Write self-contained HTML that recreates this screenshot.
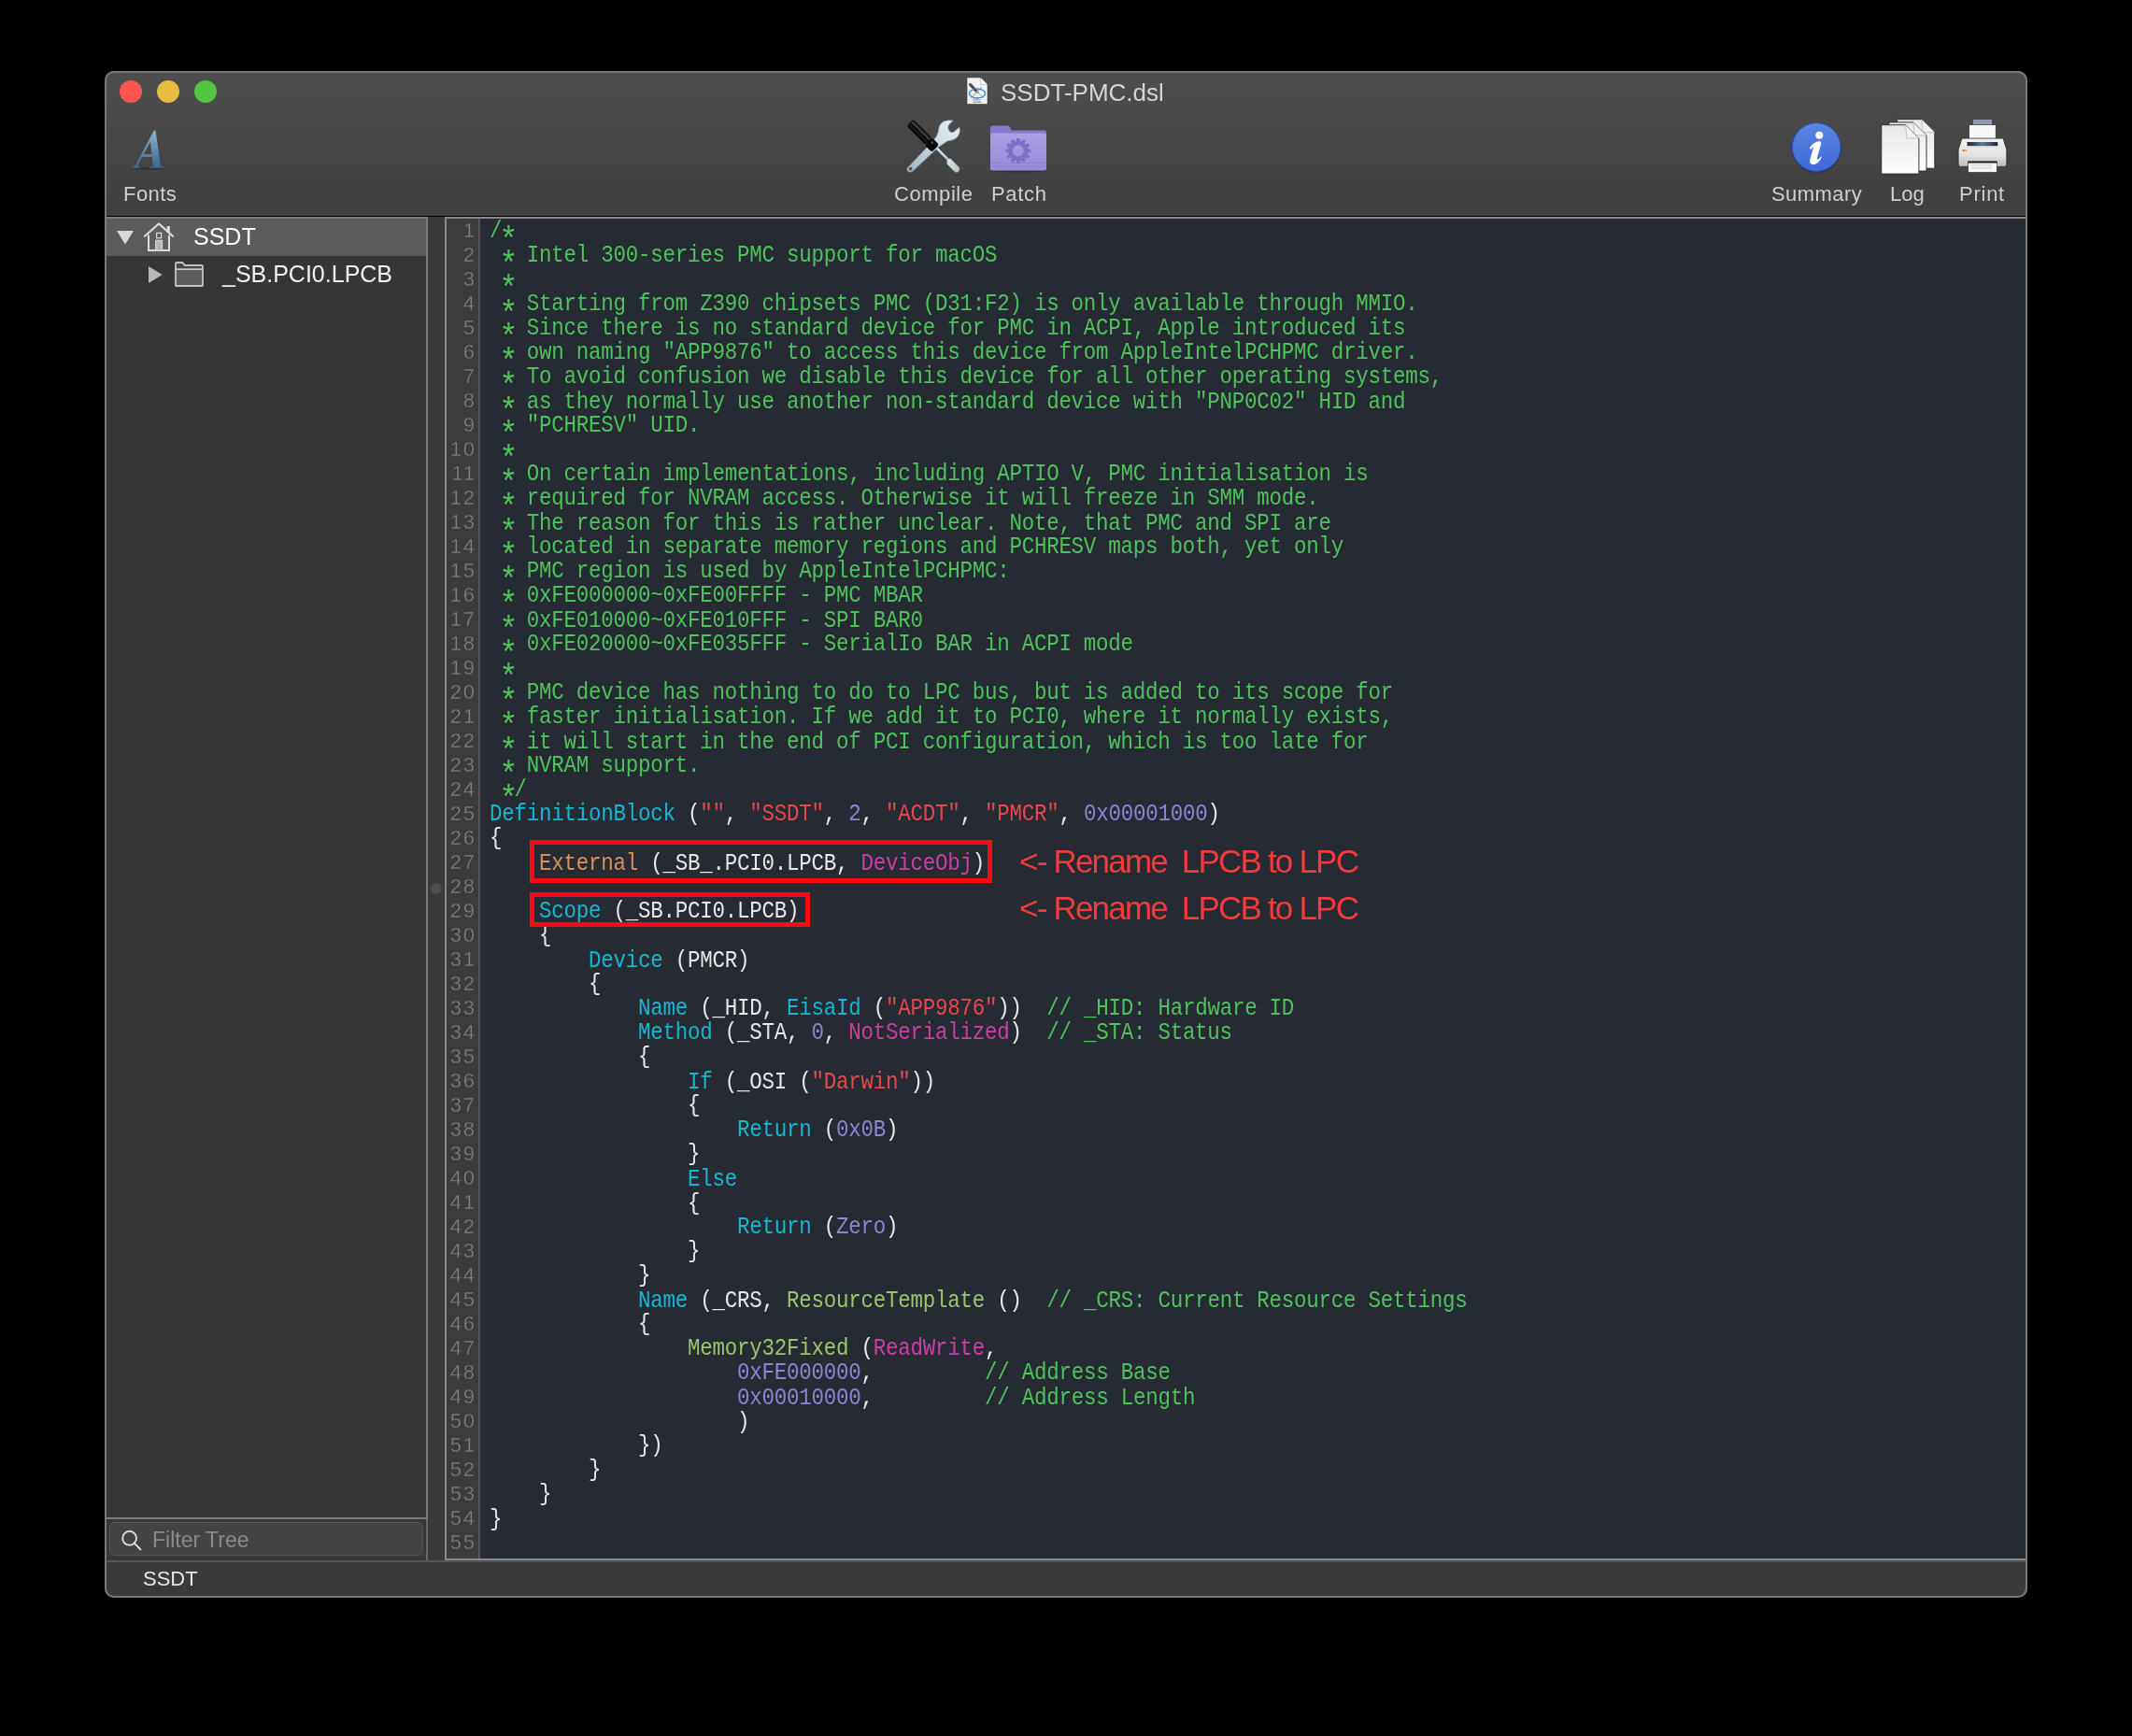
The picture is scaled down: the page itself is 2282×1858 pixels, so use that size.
<!DOCTYPE html>
<html><head><meta charset="utf-8">
<style>
*{margin:0;padding:0;box-sizing:border-box}
html,body{width:2282px;height:1858px;background:#000;overflow:hidden}
body{position:relative;font-family:"Liberation Sans",sans-serif}
.abs{position:absolute}
.nums,.code,.lbl,.ann{will-change:transform}
.ast{display:inline-block;transform:translate(0.6px,9.9px) scale(1.5)}
.win{position:absolute;left:112px;top:76px;width:2058px;height:1634px;border-radius:10px;overflow:hidden;background:#3a3a3a}
.tb{position:absolute;left:0;top:0;width:2058px;height:155px;background:linear-gradient(#4e4e4e,#3f3f3f)}
.tbline{position:absolute;left:0;top:155px;width:2058px;height:1px;background:#000}
.side{position:absolute;left:0;top:156px;width:346px;height:1394px;background:#363636;border:2px solid #7c7c7c;border-left-color:#8a8a8a}
.hl{position:absolute;left:0;top:0;width:342px;height:40px;background:#5b5b5b}
.gap{position:absolute;left:346px;top:156px;width:18px;height:1438px;background:#3a3a3a}
.filt{position:absolute;left:0;top:1550px;width:346px;height:44px;background:#383838;border-right:2px solid #6a6a6a}
.ed{position:absolute;left:364px;top:156px;width:1694px;height:1438px;border:2px solid #8a8a8a;background:#262a33}
.gut{position:absolute;left:0;top:0;width:36px;height:1434px;background:#3c3c3c;border-right:2px solid #555}
.status{position:absolute;left:0;top:1594px;width:2058px;height:40px;background:#3a3a3a;border-top:2px solid #555}
.wborder{position:absolute;left:112px;top:76px;width:2058px;height:1634px;border-radius:10px;border:2px solid #7a7a7a;pointer-events:none}
.lbl{position:absolute;font-size:22px;line-height:25px;color:#cfcfcf;white-space:pre}
.code{position:absolute;left:523.5px;top:235px;font-family:"Liberation Mono",monospace;font-size:22.5px;line-height:23.2143px;letter-spacing:-0.255px;color:#e8e8e8;white-space:pre;transform:scaleY(1.12);transform-origin:0 0}
.nums{position:absolute;left:440px;top:233.5px;width:69.5px;text-align:right;font-size:22px;line-height:26px;color:#808080;white-space:pre;letter-spacing:1.6px;-webkit-text-stroke:0.35px #3c3c3c}
.c{color:#4ec35c}
.k{color:#14b8d2}
.s{color:#e9474e}
.n{color:#8c84d6}
.m{color:#cb3fa4}
.e{color:#d9915b}
.r{color:#9cc46c}
.redbox{position:absolute;border:5px solid #ff0a10}
.ann{position:absolute;font-size:35px;line-height:40px;color:#f53b3b;white-space:pre;letter-spacing:-1.8px}
</style></head><body>
<div class="win">
  <div class="tb"></div>
  <div class="tbline"></div>
  <div class="side"><div class="hl"></div></div>
  <div class="gap"></div>
  <div class="filt"></div>
  <div class="ed"><div class="gut"></div></div>
  <div class="status"></div>
</div>
<div class="wborder"></div>

<!-- traffic lights -->
<div class="abs" style="left:128px;top:86px;width:24px;height:24px;border-radius:50%;background:#fd5650"></div>
<div class="abs" style="left:168px;top:86px;width:24px;height:24px;border-radius:50%;background:#e7bc41"></div>
<div class="abs" style="left:208px;top:86px;width:24px;height:24px;border-radius:50%;background:#54c542"></div>

<!-- title -->

<div class="lbl" style="left:1071px;top:84px;font-size:26px;line-height:30px;color:#d6d6d6">SSDT-PMC.dsl</div>

<!-- toolbar labels -->
<div class="lbl" style="left:132px;top:195px;letter-spacing:0.45px">Fonts</div>
<div class="lbl" style="left:956.5px;top:195px;letter-spacing:0.55px">Compile</div>
<div class="lbl" style="left:1061px;top:195px;letter-spacing:0.7px">Patch</div>
<div class="lbl" style="left:1895.5px;top:195px;letter-spacing:0.42px">Summary</div>
<div class="lbl" style="left:2023px;top:195px">Log</div>
<div class="lbl" style="left:2097px;top:195px;letter-spacing:0.75px">Print</div>

<!-- sidebar -->
<div class="lbl" style="left:206.5px;top:238.5px;font-size:25px;line-height:29px;color:#fff">SSDT</div>
<div class="lbl" style="left:238px;top:279px;font-size:25px;line-height:29px;color:#f2f2f2">_SB.PCI0.LPCB</div>

<!-- filter -->
<div class="abs" style="left:117px;top:1629px;width:336px;height:36px;border-radius:6px;background:#444;border:1px solid #575757"></div>
<div class="lbl" style="left:163px;top:1636px;font-size:23px;color:#8a8a8a">Filter Tree</div>
<div class="lbl" style="left:153px;top:1677px;color:#e6e6e6">SSDT</div>


<!-- title file icon -->
<svg class="abs" style="left:1030px;top:80px" width="32" height="36" viewBox="1030 80 32 36">
  <path d="M1035 83 H1049.5 L1057 90.5 V111.5 H1035 Z" fill="#f3f3f3" stroke="#3a3a3a" stroke-width="0.6"/>
  <path d="M1049.5 83 V90.5 H1057 Z" fill="#fff" stroke="#999" stroke-width="0.5"/>
  <line x1="1038.5" y1="90.5" x2="1046" y2="98.5" stroke="#444" stroke-width="3" stroke-linecap="round"/>
  <line x1="1046" y1="98.5" x2="1053" y2="105" stroke="#aaa" stroke-width="1"/>
  <line x1="1039" y1="105" x2="1051" y2="93" stroke="#bbb" stroke-width="1.4"/>
  <ellipse cx="1046" cy="100" rx="8.5" ry="5" fill="none" stroke="#2b86d1" stroke-width="1.3"/>
  <text x="1046" y="110" font-family="Liberation Sans" font-size="5" fill="#666" text-anchor="middle">DSL</text>
</svg>

<!-- Fonts A -->
<svg class="abs" style="left:138px;top:136px" width="44" height="50" viewBox="138 136 44 50">
  <defs><linearGradient id="ga" x1="0" y1="0" x2="0" y2="1"><stop offset="0" stop-color="#8db2cf"/><stop offset="1" stop-color="#3b6690"/></linearGradient></defs>
  <ellipse cx="159" cy="180.3" rx="17" ry="1.6" fill="#2e2e2e" opacity="0.7"/>
  <path fill="url(#ga)" fill-rule="evenodd" d="M164.8 139.8 L166.6 139.8 L172 178 L175 178.3 L175 179.8 L160.2 179.8 L160.2 178.3 L163.8 178 L162.8 168 L152 168 L147.6 176.5 Q147 178.2 149.5 178.3 L150 179.8 L142 179.8 L142 178.3 Q144.3 178.2 145.2 176.6 Z M161 151.8 L162.5 165 L153.6 165 Z"/>
</svg>

<!-- Compile icon -->
<svg class="abs" style="left:962px;top:122px" width="72" height="72" viewBox="962 122 72 72">
  <defs>
    <linearGradient id="gw" x1="1" y1="0" x2="0" y2="1"><stop offset="0" stop-color="#e6f1f6"/><stop offset="0.5" stop-color="#c9d8e0"/><stop offset="1" stop-color="#a3b2bb"/></linearGradient>
    <linearGradient id="gs" x1="0" y1="0" x2="1" y2="1"><stop offset="0" stop-color="#dfe8ec"/><stop offset="1" stop-color="#b5c3ca"/></linearGradient>
    <linearGradient id="gh" x1="0" y1="0" x2="0" y2="1"><stop offset="0" stop-color="#050505"/><stop offset="0.3" stop-color="#4a4a4a"/><stop offset="0.45" stop-color="#0d0d0d"/><stop offset="0.75" stop-color="#1a1a1a"/><stop offset="1" stop-color="#000"/></linearGradient>
  </defs>
  <path d="M973.4 177.6 L999.5 150 Q1003 146 1004.2 141.2 Q1004.5 133 1010 130 Q1015 128 1020.2 129.1 L1015.1 134.2 Q1013.8 138.5 1017.1 141.2 Q1019.5 142.5 1021.4 140.8 L1026.9 136.1 Q1028.5 142 1025.3 145.9 Q1022 150 1014 151 L1004.2 157.7 L977.8 182.4 Q974.6 185.6 971.8 183.2 Q969.2 180.4 973.4 177.6 Z" fill="url(#gw)" stroke="#7f9aaa" stroke-width="0.7"/>
  <circle cx="974.6" cy="180.6" r="1.9" fill="#444" stroke="#8aa3b1" stroke-width="0.5"/>
  <path d="M999.5 157.5 L1001.5 155.5 L1016.5 170.5 L1014.5 172.5 Z" fill="url(#gs)" stroke="#62727b" stroke-width="0.5"/>
  <path d="M1013.2 171.3 Q1014.5 168.8 1017.5 169.8 L1026.8 179.2 Q1028.2 182 1025.5 184.3 Q1023 185.5 1021 183.3 L1013.5 175.5 Z" fill="url(#gs)" stroke="#5f6e76" stroke-width="0.6"/>
  <g transform="translate(984 141.3) rotate(45)">
    <rect x="-13.8" y="-4.7" width="27.6" height="9.4" rx="2.4" fill="url(#gh)" stroke="#000" stroke-width="0.8"/>
  </g>
  <g transform="translate(997.6 155.2) rotate(45)">
    <rect x="-5.2" y="-5.6" width="10.4" height="11.2" rx="2.6" fill="#070707"/>
    <rect x="-3.2" y="-3.5" width="3" height="3" rx="1" fill="#555" opacity="0.8"/>
  </g>
</svg>
<!-- Patch folder -->
<svg class="abs" style="left:1056px;top:130px" width="68" height="56" viewBox="1056 130 68 56">
  <defs><linearGradient id="gf" x1="0" y1="0" x2="0" y2="1"><stop offset="0" stop-color="#ac9fe3"/><stop offset="1" stop-color="#998bd8"/></linearGradient></defs>
  <ellipse cx="1090" cy="183" rx="30" ry="1.5" fill="#2b2b2b" opacity="0.6"/>
  <path d="M1062 134.5 H1078.5 Q1080 134.5 1081 136 L1083 139.6 H1118 Q1120 139.6 1120 141.6 V150 H1060 V136.5 Q1060 134.5 1062 134.5 Z" fill="#8679c8"/>
  <rect x="1060" y="142.4" width="60" height="40" rx="2.5" fill="url(#gf)"/>
  <rect x="1060" y="174" width="60" height="1" fill="#8d80cc" opacity="0.8"/>
  <rect x="1060" y="177" width="60" height="1" fill="#8d80cc" opacity="0.8"/>
  <g transform="translate(1089.8 161.5)" fill="#7d6ec6"><path fill-rule="evenodd" d="M-1.93 -10.42 L-1.78 -13.48 L1.78 -13.48 L1.93 -10.42 L3.54 -9.99 L5.20 -12.56 L8.28 -10.79 L6.88 -8.06 L8.06 -6.88 L10.79 -8.28 L12.56 -5.20 L9.99 -3.54 L10.42 -1.93 L13.48 -1.78 L13.48 1.78 L10.42 1.93 L9.99 3.54 L12.56 5.20 L10.79 8.28 L8.06 6.88 L6.88 8.06 L8.28 10.79 L5.20 12.56 L3.54 9.99 L1.93 10.42 L1.78 13.48 L-1.78 13.48 L-1.93 10.42 L-3.54 9.99 L-5.20 12.56 L-8.28 10.79 L-6.88 8.06 L-8.06 6.88 L-10.79 8.28 L-12.56 5.20 L-9.99 3.54 L-10.42 1.93 L-13.48 1.78 L-13.48 -1.78 L-10.42 -1.93 L-9.99 -3.54 L-12.56 -5.20 L-10.79 -8.28 L-8.06 -6.88 L-6.88 -8.06 L-8.28 -10.79 L-5.20 -12.56 L-3.54 -9.99 Z M0 -6 A6 6 0 1 0 0.01 -6 Z"/></g>
</svg>

<!-- Summary -->
<svg class="abs" style="left:1912px;top:126px" width="66" height="64" viewBox="1912 126 66 64">
  <defs><linearGradient id="gi" x1="0" y1="0" x2="0" y2="1"><stop offset="0" stop-color="#5c85e0"/><stop offset="1" stop-color="#3d69d6"/></linearGradient></defs>
  <circle cx="1944.2" cy="158.8" r="26.3" fill="#2a2a2a" opacity="0.55"/>
  <circle cx="1944.2" cy="157.5" r="25.9" fill="url(#gi)" stroke="#1d4cc0" stroke-width="0.9"/>
  <circle cx="1947.3" cy="144.8" r="4" fill="#fff"/>
  <path fill="#fff" d="M1938.4 159.4 Q1936.4 160 1937 157.9 Q1941.5 152 1946.5 151.3 Q1949.5 150.8 1949.3 153.5 L1944.8 169.5 Q1944.6 171.2 1946 170.4 L1950.2 167 Q1948.5 173 1943.5 175.5 Q1939.5 177 1937.8 175 Q1936.8 173.5 1937.4 170.5 L1941.3 157.3 Z"/>
</svg>

<!-- Log -->
<svg class="abs" style="left:2010px;top:124px" width="66" height="66" viewBox="2010 124 66 66">
  <defs><linearGradient id="gp" x1="0" y1="0" x2="0" y2="1"><stop offset="0" stop-color="#e6e6e6"/><stop offset="1" stop-color="#ffffff"/></linearGradient></defs>
  <path d="M2030.7 127.7 H2057 L2070.8 141.5 V180.2 H2030.7 Z" fill="url(#gp)" stroke="#262626" stroke-width="0.9"/>
  <path d="M2057 127.7 L2070.8 141.5 H2058 Z" fill="#f0f0f0" stroke="#999" stroke-width="0.5"/>
  <path d="M2021.9 130.9 H2048 L2062 144.9 V183 H2021.9 Z" fill="url(#gp)" stroke="#262626" stroke-width="0.9"/>
  <path d="M2048 130.9 L2062 144.9 H2049 Z" fill="#f0f0f0" stroke="#999" stroke-width="0.5"/>
  <path d="M2013.8 133.7 H2039.5 L2053.9 148 V186.1 H2013.8 Z" fill="url(#gp)" stroke="#262626" stroke-width="0.9"/>
  <path d="M2039.5 133.7 L2053.9 148 H2041 Z" fill="#f2f2f2" stroke="#999" stroke-width="0.5"/>
</svg>

<!-- Print -->
<svg class="abs" style="left:2092px;top:124px" width="62" height="66" viewBox="2092 124 62 66">
  <defs>
    <linearGradient id="gb" x1="0" y1="0" x2="0" y2="1"><stop offset="0" stop-color="#f2f2f2"/><stop offset="0.6" stop-color="#e2e2e2"/><stop offset="1" stop-color="#b9b9b9"/></linearGradient>
    <linearGradient id="gsl" x1="0" y1="0" x2="1" y2="0"><stop offset="0" stop-color="#1b2433"/><stop offset="0.5" stop-color="#5c7aa0"/><stop offset="1" stop-color="#1b2433"/></linearGradient>
  </defs>
  <rect x="2112" y="128" width="20" height="6" fill="#8d9bb2"/>
  <rect x="2107.7" y="133.7" width="28.5" height="19" fill="#f7f7f7" stroke="#222" stroke-width="0.6"/>
  <path d="M2100 148.1 H2144 L2147.8 160 V176 Q2147.8 178.4 2145.5 178.4 H2098.4 Q2096.1 178.4 2096.1 176 V160 Z" fill="url(#gb)" stroke="#2a2a2a" stroke-width="0.8"/>
  <rect x="2105.6" y="152" width="32.7" height="4" fill="url(#gsl)"/>
  <rect x="2105.5" y="156" width="33" height="1.2" fill="#c8c8c8"/>
  <rect x="2100.5" y="160.2" width="3" height="1.6" fill="#e8553a"/>
  <rect x="2103.5" y="160.2" width="2" height="1.6" fill="#f0a030"/>
  <rect x="2106.2" y="172.4" width="31.6" height="2" fill="#222"/>
  <rect x="2106.7" y="174.2" width="30.6" height="10.2" fill="#f5f5f5" stroke="#333" stroke-width="0.6"/>
  <rect x="2110" y="176.5" width="22" height="0.8" fill="#bbb"/>
  <rect x="2110" y="179.5" width="22" height="0.8" fill="#bbb"/>
</svg>

<!-- sidebar icons -->
<svg class="abs" style="left:120px;top:236px" width="110" height="76" viewBox="120 236 110 76">
  <path d="M125 247.1 L143 247.1 L134 261.5 Z" fill="#d9d9d9"/>
  <path d="M159 285 L159 303.1 L173.7 294 Z" fill="#b9b9b9"/>
  <!-- house -->
  <path d="M159 252.5 L170 242 L181 252.5 V268 H159 Z" fill="#5d605f"/>
  <path d="M155 252.8 L170 239.5 L185 252.8" fill="none" stroke="#dcdcdc" stroke-width="2.2" stroke-linecap="round"/>
  <path d="M159 251.5 V268 H181 V251.5" fill="none" stroke="#dcdcdc" stroke-width="2"/>
  <rect x="178.6" y="242" width="3.2" height="7" fill="#dcdcdc"/>
  <rect x="167.6" y="249.4" width="5" height="5.4" fill="#5d605f" stroke="#dcdcdc" stroke-width="1.2"/>
  <rect x="166.6" y="257.2" width="7" height="10.8" fill="#b8b8b8" stroke="#dcdcdc" stroke-width="1"/>
  <!-- folder -->
  <path d="M187 281 H195 L197.5 284 H217 V305 H187 Z" fill="#464948"/>
  <rect x="187.6" y="288.2" width="29.4" height="17" fill="#595c5b"/>
  <path d="M188 305.5 V282.2 Q188 281 189.2 281 H195.2 L197.8 284 H215.6 Q217 284 217 285.4 V305.5 Q217 306 216.5 306 H188.5 Q188 306 188 305.5 Z" fill="none" stroke="#c3c3c3" stroke-width="1.8"/>
  <line x1="188" y1="288.2" x2="217" y2="288.2" stroke="#c3c3c3" stroke-width="1.8"/>
</svg>

<!-- search icon -->
<svg class="abs" style="left:124px;top:1632px" width="32" height="32" viewBox="124 1632 32 32">
  <circle cx="138.6" cy="1646.3" r="7.4" fill="none" stroke="#e6e6e6" stroke-width="1.8"/>
  <line x1="143.8" y1="1651.6" x2="150.4" y2="1658.4" stroke="#e6e6e6" stroke-width="1.9" stroke-linecap="round"/>
</svg>

<!-- divider dot -->
<div class="abs" style="left:461px;top:945px;width:12px;height:12px;border-radius:50%;background:#4f4f4f"></div>

<div class="nums">1
2
3
4
5
6
7
8
9
10
11
12
13
14
15
16
17
18
19
20
21
22
23
24
25
26
27
28
29
30
31
32
33
34
35
36
37
38
39
40
41
42
43
44
45
46
47
48
49
50
51
52
53
54
55</div>
<div class="code"><span class="c">/<span class="ast">*</span></span>
<span class="c"> <span class="ast">*</span> Intel 300-series PMC support for macOS</span>
<span class="c"> <span class="ast">*</span></span>
<span class="c"> <span class="ast">*</span> Starting from Z390 chipsets PMC (D31:F2) is only available through MMIO.</span>
<span class="c"> <span class="ast">*</span> Since there is no standard device for PMC in ACPI, Apple introduced its</span>
<span class="c"> <span class="ast">*</span> own naming "APP9876" to access this device from AppleIntelPCHPMC driver.</span>
<span class="c"> <span class="ast">*</span> To avoid confusion we disable this device for all other operating systems,</span>
<span class="c"> <span class="ast">*</span> as they normally use another non-standard device with "PNP0C02" HID and</span>
<span class="c"> <span class="ast">*</span> "PCHRESV" UID.</span>
<span class="c"> <span class="ast">*</span></span>
<span class="c"> <span class="ast">*</span> On certain implementations, including APTIO V, PMC initialisation is</span>
<span class="c"> <span class="ast">*</span> required for NVRAM access. Otherwise it will freeze in SMM mode.</span>
<span class="c"> <span class="ast">*</span> The reason for this is rather unclear. Note, that PMC and SPI are</span>
<span class="c"> <span class="ast">*</span> located in separate memory regions and PCHRESV maps both, yet only</span>
<span class="c"> <span class="ast">*</span> PMC region is used by AppleIntelPCHPMC:</span>
<span class="c"> <span class="ast">*</span> 0xFE000000~0xFE00FFFF - PMC MBAR</span>
<span class="c"> <span class="ast">*</span> 0xFE010000~0xFE010FFF - SPI BAR0</span>
<span class="c"> <span class="ast">*</span> 0xFE020000~0xFE035FFF - SerialIo BAR in ACPI mode</span>
<span class="c"> <span class="ast">*</span></span>
<span class="c"> <span class="ast">*</span> PMC device has nothing to do to LPC bus, but is added to its scope for</span>
<span class="c"> <span class="ast">*</span> faster initialisation. If we add it to PCI0, where it normally exists,</span>
<span class="c"> <span class="ast">*</span> it will start in the end of PCI configuration, which is too late for</span>
<span class="c"> <span class="ast">*</span> NVRAM support.</span>
<span class="c"> <span class="ast">*</span>/</span>
<span class="k">DefinitionBlock</span> (<span class="s">""</span>, <span class="s">"SSDT"</span>, <span class="n">2</span>, <span class="s">"ACDT"</span>, <span class="s">"PMCR"</span>, <span class="n">0x00001000</span>)
{
    <span class="e">External</span> (_SB_.PCI0.LPCB, <span class="m">DeviceObj</span>)

    <span class="k">Scope</span> (_SB.PCI0.LPCB)
    {
        <span class="k">Device</span> (PMCR)
        {
            <span class="k">Name</span> (_HID, <span class="k">EisaId</span> (<span class="s">"APP9876"</span>))  <span class="c">// _HID: Hardware ID</span>
            <span class="k">Method</span> (_STA, <span class="n">0</span>, <span class="m">NotSerialized</span>)  <span class="c">// _STA: Status</span>
            {
                <span class="k">If</span> (_OSI (<span class="s">"Darwin"</span>))
                {
                    <span class="k">Return</span> (<span class="n">0x0B</span>)
                }
                <span class="k">Else</span>
                {
                    <span class="k">Return</span> (<span class="n">Zero</span>)
                }
            }
            <span class="k">Name</span> (_CRS, <span class="r">ResourceTemplate</span> ()  <span class="c">// _CRS: Current Resource Settings</span>
            {
                <span class="r">Memory32Fixed</span> (<span class="m">ReadWrite</span>,
                    <span class="n">0xFE000000</span>,         <span class="c">// Address Base</span>
                    <span class="n">0x00010000</span>,         <span class="c">// Address Length</span>
                    )
            })
        }
    }
}
</div>

<div class="redbox" style="left:567px;top:899px;width:495px;height:46px"></div>
<div class="redbox" style="left:567px;top:955px;width:300px;height:37px"></div>
<div class="ann" style="left:1091px;top:902px">&lt;- Rename  LPCB to LPC</div>
<div class="ann" style="left:1091px;top:952px">&lt;- Rename  LPCB to LPC</div>
</body></html>
